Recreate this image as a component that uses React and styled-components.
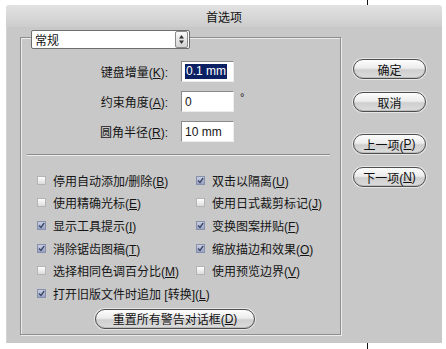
import styled, { createGlobalStyle } from 'styled-components';

const GlobalStyle = createGlobalStyle`
  html, body {
    margin: 0;
    background: #fff;
  }
  body {
    font-family: "Liberation Sans", "Noto Sans CJK SC", sans-serif;
    font-size: 12px;
    color: #151515;
  }
`;

const Page = styled.div`
  position: relative;
  width: 446px;
  height: 349px;
  padding: 5px 4px 6px 6px;
  box-sizing: border-box;
  overflow: hidden;
`;

const WindowEdge = styled.div`
  position: absolute;
  left: 367px;
  top: 0;
  width: 1px;
  height: 349px;
  background: #111;
`;

const Dialog = styled.div`
  position: relative;
  height: 338px;
  background: #c8c8c8;
  border-radius: 4px 4px 0 0;
  display: flex;
  flex-direction: column;
  box-shadow: inset 1px 0 0 #d4d4d4;
`;

const TitleBar = styled.div`
  height: 22px;
  display: flex;
  align-items: center;
  justify-content: center;
  border-radius: 4px 4px 0 0;
  background: linear-gradient(#e2e2e2, #cdcdcd);
  color: #111;
  font-size: 12px;
`;

const Body = styled.div`
  display: flex;
  padding: 10px 0 0 14px;
  gap: 12px;
`;

const GroupBox = styled.div`
  width: 321px;
  height: 298px;
  box-sizing: border-box;
  border: 1px solid #8e8e8e;
  box-shadow: inset 1px 1px 0 #ececec, 1px 1px 0 #ececec;
  display: flex;
  flex-direction: column;
`;

const Select = styled.div`
  margin: -8px 0 0 10px;
  width: 159px;
  height: 19px;
  box-sizing: border-box;
  display: flex;
  align-items: center;
  background: #fff;
  border: 1px solid #6e6e6e;
  border-radius: 2px;
  span {
    flex: 1;
    padding-left: 3px;
    font-size: 12px;
  }
`;

const Spinner = styled.div`
  width: 11px;
  height: 15px;
  margin-right: 1px;
  border: 1px solid #8a8a8a;
  border-radius: 2px;
  background: linear-gradient(#fafafa, #d2d2d2);
  display: flex;
  align-items: center;
  justify-content: center;
`;

const Fields = styled.div`
  margin-top: 12px;
  display: flex;
  flex-direction: column;
  gap: 9px;
`;

const FieldRow = styled.div`
  display: flex;
  align-items: center;
  height: 21px;
`;

const Label = styled.div`
  width: 147px;
  text-align: right;
  margin-right: 13px;
  font-size: 12px;
`;

const Input = styled.div`
  width: 53px;
  height: 21px;
  box-sizing: border-box;
  background: #fff;
  border-style: solid;
  border-width: 1px;
  border-color: #8a8a8a #ededed #ededed #8a8a8a;
  display: flex;
  align-items: center;
  padding-left: 3px;
  font-size: 12px;
`;

const Selected = styled.span`
  background: #0b2163;
  color: #fff;
  padding: 1px 1px;
  line-height: 13px;
`;

const Unit = styled.span`
  margin-left: 6px;
  margin-top: -10px;
  font-size: 11px;
`;

const Separator = styled.div`
  margin: 12px 10px 0 6px;
  height: 1px;
  background: #8c8c8c;
  border-bottom: 1px solid #ededed;
`;

const CheckGrid = styled.div`
  margin-top: 13px;
  padding-left: 16px;
  display: grid;
  grid-template-columns: 159px auto;
  grid-auto-rows: 22.6px;
`;

const CheckItem = styled.label`
  display: flex;
  align-items: center;
  gap: 7px;
  font-size: 12px;
  white-space: nowrap;
  ${(p) => p.$span && 'grid-column: 1 / span 2;'}
`;

const Box = styled.span`
  width: 9px;
  height: 9px;
  box-sizing: border-box;
  border: 1px solid ${(p) => (p.$checked ? '#8790ad' : '#b4b4b4')};
  background: ${(p) =>
    p.$checked
      ? 'linear-gradient(#c9cfe2, #97a1c2)'
      : 'linear-gradient(#ffffff, #dcdcdc)'};
  display: flex;
  align-items: center;
  justify-content: center;
`;

const Pill = styled.button`
  width: ${(p) => p.$width || 73}px;
  height: 20px;
  padding: 0;
  border: 1px solid #4e4e4e;
  border-radius: 10px;
  background: linear-gradient(#fdfdfd, #ececec 45%, #cfcfcf 55%, #dcdcdc);
  box-shadow: 0 0 0 1px rgba(255, 255, 255, 0.55), inset 0 -1px 0 #bdbdbd;
  font-family: inherit;
  font-size: 12px;
  color: #111;
  display: flex;
  align-items: center;
  justify-content: center;
`;

const ResetRow = styled.div`
  margin: 4px 0 0 74px;
`;

const Buttons = styled.div`
  padding-top: 22px;
  display: flex;
  flex-direction: column;
`;

const Spacer = styled.div`
  height: ${(p) => p.$h}px;
`;

const Check = () => (
  <svg width="7" height="7" viewBox="0 0 7 7">
    <path d="M1 3.5 L3 5.5 L6.2 1" stroke="#3b4566" strokeWidth="1.3" fill="none" />
  </svg>
);

const checks = [
  ['停用自动添加/删除', 'B', false],
  ['双击以隔离', 'U', true],
  ['使用精确光标', 'E', false],
  ['使用日式裁剪标记', 'J', false],
  ['显示工具提示', 'I', true],
  ['变换图案拼贴', 'F', true],
  ['消除锯齿图稿', 'T', true],
  ['缩放描边和效果', 'O', true],
  ['选择相同色调百分比', 'M', false],
  ['使用预览边界', 'V', false],
];

export default function App() {
  return (
    <>
      <GlobalStyle />
      <Page>
        <WindowEdge />
        <Dialog>
          <TitleBar>首选项</TitleBar>
          <Body>
            <GroupBox>
              <Select>
                <span>常规</span>
                <Spinner>
                  <svg width="7" height="11" viewBox="0 0 7 11">
                    <path d="M3.5 1 L6 4.5 L1 4.5 Z" fill="#333" />
                    <path d="M3.5 10 L6 6.5 L1 6.5 Z" fill="#333" />
                  </svg>
                </Spinner>
              </Select>
              <Fields>
                <FieldRow>
                  <Label>键盘增量(<u>K</u>):</Label>
                  <Input>
                    <Selected>0.1 mm</Selected>
                  </Input>
                </FieldRow>
                <FieldRow>
                  <Label>约束角度(<u>A</u>):</Label>
                  <Input>0</Input>
                  <Unit>°</Unit>
                </FieldRow>
                <FieldRow>
                  <Label>圆角半径(<u>R</u>):</Label>
                  <Input>10 mm</Input>
                </FieldRow>
              </Fields>
              <Separator />
              <CheckGrid>
                {checks.map(([text, key, on]) => (
                  <CheckItem key={key}>
                    <Box $checked={on}>{on && <Check />}</Box>
                    <span>
                      {text}(<u>{key}</u>)
                    </span>
                  </CheckItem>
                ))}
                <CheckItem $span>
                  <Box $checked>
                    <Check />
                  </Box>
                  <span>
                    打开旧版文件时追加 [转换](<u>L</u>)
                  </span>
                </CheckItem>
              </CheckGrid>
              <ResetRow>
                <Pill $width={160}>
                  重置所有警告对话框(<u>D</u>)
                </Pill>
              </ResetRow>
            </GroupBox>
            <Buttons>
              <Pill>确定</Pill>
              <Spacer $h={13} />
              <Pill>取消</Pill>
              <Spacer $h={22} />
              <Pill>
                上一项(<u>P</u>)
              </Pill>
              <Spacer $h={13} />
              <Pill>
                下一项(<u>N</u>)
              </Pill>
            </Buttons>
          </Body>
        </Dialog>
      </Page>
    </>
  );
}
